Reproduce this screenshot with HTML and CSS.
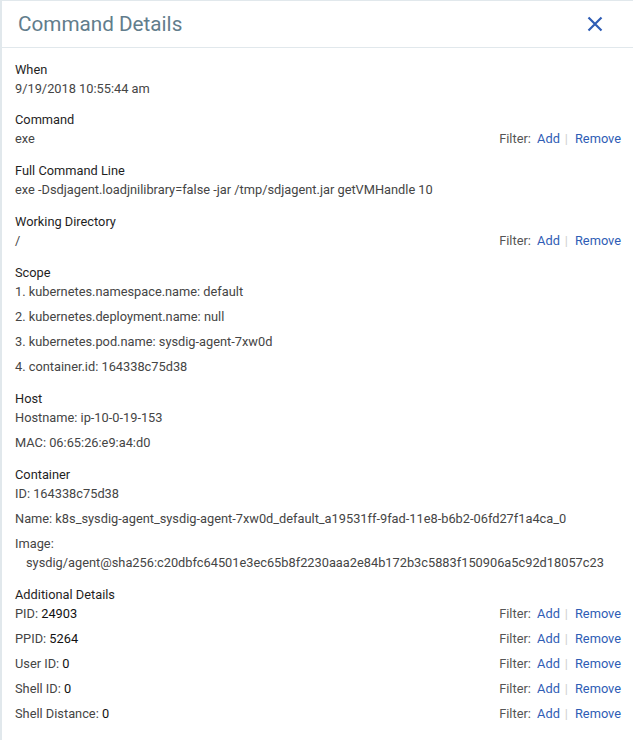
FILE: index.html
```html
<!DOCTYPE html>
<html>
<head>
<meta charset="utf-8">
<link rel="stylesheet" href="styles.css">
</head>
<body>
<div class="panel">
  <div class="header">
    <h1 class="title">Command Details</h1>
    <svg class="close" width="16" height="16" viewBox="0 0 16 16"><path d="M1.5 1.5 L14.5 14.5 M14.5 1.5 L1.5 14.5" stroke="#2f5db5" stroke-width="2.2" fill="none"/></svg>
  </div>
  <div class="content">
    <div class="section">
      <div class="label">When</div>
      <div class="row"><span class="value">9/19/2018 10:55:44 am</span></div>
    </div>
    <div class="section">
      <div class="label">Command</div>
      <div class="row"><span class="value">exe</span><span class="filter">Filter: <a>Add</a><span class="sep">|</span><a>Remove</a></span></div>
    </div>
    <div class="section">
      <div class="label">Full Command Line</div>
      <div class="row"><span class="value">exe -Dsdjagent.loadjnilibrary=false -jar /tmp/sdjagent.jar getVMHandle 10</span></div>
    </div>
    <div class="section">
      <div class="label">Working Directory</div>
      <div class="row"><span class="value">/</span><span class="filter">Filter: <a>Add</a><span class="sep">|</span><a>Remove</a></span></div>
    </div>
    <div class="section">
      <div class="label">Scope</div>
      <div class="row"><span class="value">1. kubernetes.namespace.name: default</span></div>
      <div class="row"><span class="value">2. kubernetes.deployment.name: null</span></div>
      <div class="row"><span class="value">3. kubernetes.pod.name: sysdig-agent-7xw0d</span></div>
      <div class="row"><span class="value">4. container.id: 164338c75d38</span></div>
    </div>
    <div class="section">
      <div class="label">Host</div>
      <div class="row"><span class="value">Hostname: ip-10-0-19-153</span></div>
      <div class="row"><span class="value">MAC: 06:65:26:e9:a4:d0</span></div>
    </div>
    <div class="section">
      <div class="label">Container</div>
      <div class="row"><span class="value">ID: 164338c75d38</span></div>
      <div class="row"><span class="value">Name: k8s_sysdig-agent_sysdig-agent-7xw0d_default_a19531ff-9fad-11e8-b6b2-06fd27f1a4ca_0</span></div>
      <div class="row"><span class="value">Image:</span></div>
      <div class="row indent"><span class="value">sysdig/agent@sha256:c20dbfc64501e3ec65b8f2230aaa2e84b172b3c5883f150906a5c92d18057c23</span></div>
    </div>
    <div class="section">
      <div class="label">Additional Details</div>
      <div class="row"><span class="value">PID: <b>24903</b></span><span class="filter">Filter: <a>Add</a><span class="sep">|</span><a>Remove</a></span></div>
      <div class="row"><span class="value">PPID: <b>5264</b></span><span class="filter">Filter: <a>Add</a><span class="sep">|</span><a>Remove</a></span></div>
      <div class="row"><span class="value">User ID: <b>0</b></span><span class="filter">Filter: <a>Add</a><span class="sep">|</span><a>Remove</a></span></div>
      <div class="row"><span class="value">Shell ID: <b>0</b></span><span class="filter">Filter: <a>Add</a><span class="sep">|</span><a>Remove</a></span></div>
      <div class="row"><span class="value">Shell Distance: <b>0</b></span><span class="filter">Filter: <a>Add</a><span class="sep">|</span><a>Remove</a></span></div>
    </div>
  </div>
</div>
</body>
</html>
```
FILE: styles.css
```css
html, body {
  margin: 0;
  padding: 0;
  background: #fff;
}
body {
  font-family: Roboto, "Liberation Sans", sans-serif;
  width: 633px;
  height: 741px;
  overflow: hidden;
}
.panel {
  border-left: 2px solid #e1e8ec;
  border-top: 1px solid #e1e8ec;
  height: 740px;
  box-sizing: border-box;
}
.header {
  height: 46px;
  border-bottom: 1px solid #e1e8ec;
  display: flex;
  align-items: center;
  justify-content: space-between;
  padding: 0 30px 0 16px;
}
.title {
  margin: 0;
  font-size: 20.7px;
  font-weight: 400;
  color: #627d8c;
}
.close {
  display: block;
}
.content {
  padding: 13px 12px 0 13px;
}
.section {
  margin-bottom: 14px;
}
.section:first-child {
  margin-bottom: 13px;
}
.label {
  font-size: 12.8px;
  line-height: 18px;
  font-weight: 400;
  color: #1f1f1f;
}
.row {
  display: flex;
  justify-content: space-between;
  font-size: 12.8px;
  line-height: 18px;
  color: #454545;
  margin-top: 7px;
}
.label + .row,
.row.indent {
  margin-top: 1px;
}
.row.indent {
  padding-left: 11px;
}
.value b {
  font-weight: 400;
  color: #111;
}
.filter {
  color: #555;
}
.filter a {
  color: #2f5db5;
  margin-left: 3px;
}
.filter .sep {
  color: #d0d0d0;
  margin: 0 4px 0 5px;
}
```
